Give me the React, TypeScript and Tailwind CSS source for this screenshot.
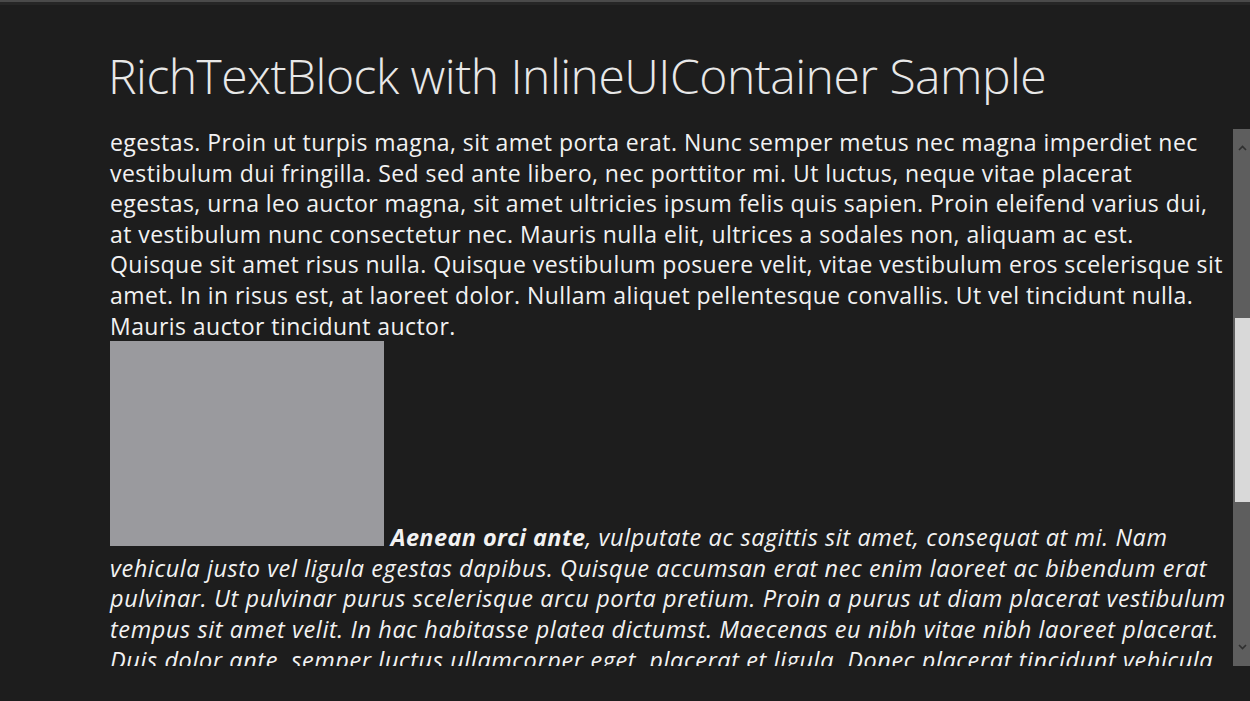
import React from "react";

const first = [
  "egestas. Proin ut turpis magna, sit amet porta erat. Nunc semper metus nec magna imperdiet nec",
  "vestibulum dui fringilla. Sed sed ante libero, nec porttitor mi. Ut luctus, neque vitae placerat",
  "egestas, urna leo auctor magna, sit amet ultricies ipsum felis quis sapien. Proin eleifend varius dui,",
  "at vestibulum nunc consectetur nec. Mauris nulla elit, ultrices a sodales non, aliquam ac est.",
  "Quisque sit amet risus nulla. Quisque vestibulum posuere velit, vitae vestibulum eros scelerisque sit",
  "amet. In in risus est, at laoreet dolor. Nullam aliquet pellentesque convallis. Ut vel tincidunt nulla.",
  "Mauris auctor tincidunt auctor.",
];

const second = [
  "vehicula justo vel ligula egestas dapibus. Quisque accumsan erat nec enim laoreet ac bibendum erat",
  "pulvinar. Ut pulvinar purus scelerisque arcu porta pretium. Proin a purus ut diam placerat vestibulum",
  "tempus sit amet velit. In hac habitasse platea dictumst. Maecenas eu nibh vitae nibh laoreet placerat.",
  "Duis dolor ante, semper luctus ullamcorper eget, placerat et ligula. Donec placerat tincidunt vehicula",
];

function Chevron({ up }: { up?: boolean }) {
  return (
    <svg width="9" height="6" viewBox="0 0 9 6" className="block">
      <path
        d={up ? "M1 5 L4.5 1.5 L8 5" : "M1 1 L4.5 4.5 L8 1"}
        fill="none"
        stroke="#2f2f2f"
        strokeWidth="1.6"
      />
    </svg>
  );
}

function ScrollBar() {
  return (
    <div className="mt-[2px] flex h-[537px] w-[17px] shrink-0 flex-col bg-[#5e5e5e]">
      <div className="flex h-[38px] items-center justify-center pl-[2px]">
        <Chevron up />
      </div>
      <div className="h-[151px]" />
      <div className="ml-[2px] h-[184px] bg-[#d9d9d9]" />
      <div className="flex-1" />
      <div className="flex h-[38px] items-center justify-center pl-[2px]">
        <Chevron />
      </div>
    </div>
  );
}

export default function App() {
  return (
    <div className="h-[701px] w-[1250px] overflow-hidden border-t-2 border-[#4a4a4a] bg-[#1d1d1d] font-['Open_Sans',sans-serif] text-[#f2f2f2]">
      <div className="h-[3px] bg-[#262626]" />
      <h1 className="pl-[108px] pt-[41px] text-[48px] font-light leading-[59px] tracking-[-0.5px] text-[#e8e8e8]">
        RichTextBlock with InlineUIContainer Sample
      </h1>
      <div className="mt-[22px] flex">
        <div className="h-[539px] flex-1 overflow-hidden pl-[110px] text-[23px] leading-[30.6px] tracking-[0.45px] whitespace-nowrap">
          <p>
            {first.map((l) => (
              <React.Fragment key={l}>
                {l}
                <br />
              </React.Fragment>
            ))}
          </p>
          <p className="text-[23.5px] italic tracking-[0.6px]">
            <span className="inline-block h-[205px] w-[274px] bg-[#9a9a9e] align-baseline" />{" "}
            <b className="font-bold tracking-[0.4px]">Aenean orci ante</b>, vulputate ac sagittis sit amet, consequat at mi. Nam
            <br />
            {second.map((l) => (
              <React.Fragment key={l}>
                {l}
                <br />
              </React.Fragment>
            ))}
          </p>
        </div>
        <ScrollBar />
      </div>
    </div>
  );
}
